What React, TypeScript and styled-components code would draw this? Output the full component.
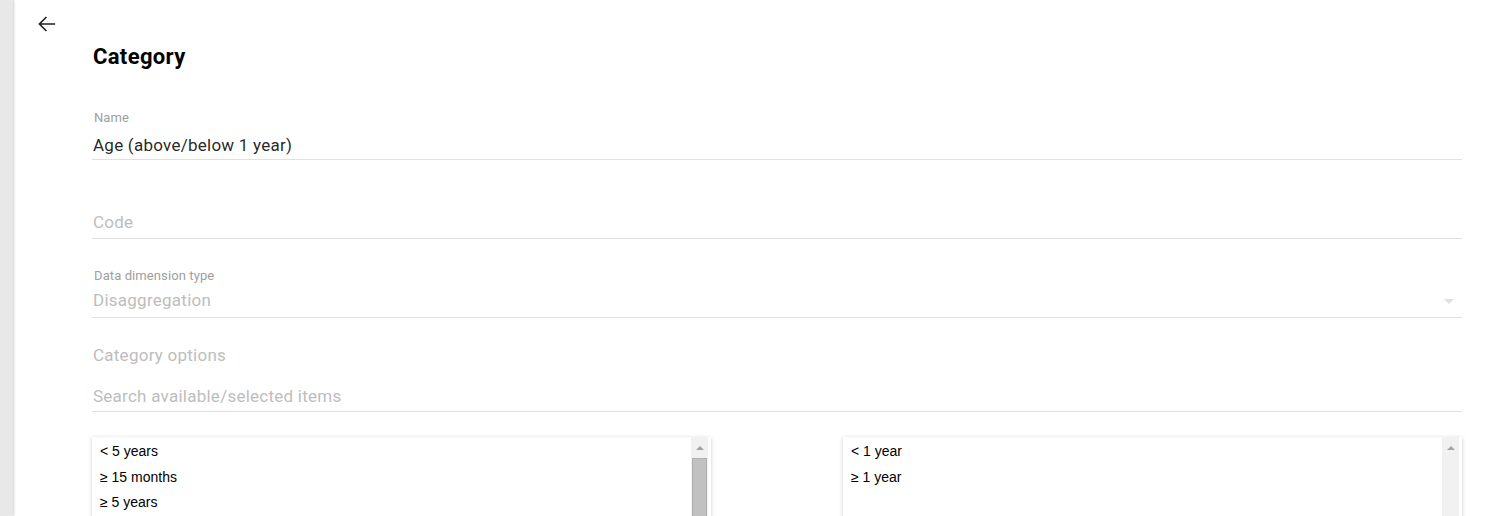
import React from 'react';
import styled, { createGlobalStyle } from 'styled-components';

const Global = createGlobalStyle`
  html, body {
    margin: 0;
    padding: 0;
    background: #ffffff;
    font-family: Roboto, "Liberation Sans", sans-serif;
    overflow: hidden;
  }
`;

const Page = styled.div`
  display: flex;
  height: 516px;
  overflow: hidden;
`;

const Sidebar = styled.div`
  width: 13px;
  flex-shrink: 0;
  background: #e8e8e8;
  box-shadow: 1px 0 2px rgba(0, 0, 0, 0.18);
`;

const Main = styled.div`
  flex: 1;
  position: relative;
  padding: 0 41px 0 79px;
`;

const BackButton = styled.button`
  position: absolute;
  left: 21px;
  top: 11px;
  width: 26px;
  height: 26px;
  padding: 0;
  border: 0;
  background: none;
  display: flex;
  align-items: center;
  justify-content: center;
  color: #212121;
`;

const Title = styled.h2`
  margin: 0;
  padding: 45px 0 0 1px;
  font-size: 22px;
  font-weight: 700;
  color: #000;
  line-height: 24px;
  letter-spacing: 0.35px;
`;

const Field = styled.div<{ $top: number }>`
  margin-top: ${p => p.$top}px;
  border-bottom: 1px solid #e0e0e0;
  position: relative;
`;

const Label = styled.div`
  font-size: 13px;
  color: #9e9e9e;
  line-height: 14px;
  padding-left: 2px;
  letter-spacing: 0.1px;
`;

const Value = styled.div<{ $muted?: boolean; $pt: number; $pb: number }>`
  font-size: 17px;
  letter-spacing: 0.25px;
  line-height: 20px;
  padding-left: 1px;
  color: ${p => (p.$muted ? '#bdbdbd' : 'rgba(0, 0, 0, 0.87)')};
  padding-top: ${p => p.$pt}px;
  padding-bottom: ${p => p.$pb}px;
`;

const Caret = styled.div`
  position: absolute;
  right: 8px;
  bottom: 13px;
  width: 0;
  height: 0;
  border-left: 5px solid transparent;
  border-right: 5px solid transparent;
  border-top: 5px solid #e0e0e0;
`;

const SectionLabel = styled.div`
  margin-top: 27px;
  padding-left: 1px;
  font-size: 17px;
  letter-spacing: 0.25px;
  line-height: 20px;
  color: #bdbdbd;
`;

const Lists = styled.div`
  margin-top: 25px;
  display: grid;
  grid-template-columns: 1fr 132px 1fr;
`;

const ListBox = styled.div`
  height: 200px;
  display: flex;
  background: #fff;
  box-shadow: 0 1px 4px rgba(0, 0, 0, 0.2);
`;

const Items = styled.ul`
  flex: 1;
  margin: 0;
  padding: 6px 0 0 8px;
  list-style: none;
  font-family: "Liberation Sans", Arial, sans-serif;
  font-size: 14px;
  color: #000;
`;

const Item = styled.li`
  line-height: 16px;
  height: 25.5px;
  box-sizing: border-box;
`;

const Track = styled.div`
  width: 17px;
  margin-right: 3px;
  background: #f1f1f1;
  display: flex;
  flex-direction: column;
  align-items: stretch;
`;

const ArrowUp = styled.div`
  height: 21px;
  display: flex;
  align-items: center;
  justify-content: center;
  &::before {
    content: '';
    border-left: 4px solid transparent;
    border-right: 4px solid transparent;
    border-bottom: 4px solid #a3a3a3;
  }
`;

const Thumb = styled.div`
  margin: 0 1px;
  height: 120px;
  background: #c1c1c1;
  border: 1px solid #b0b0b0;
`;

const available = ['< 5 years', '≥ 15 months', '≥ 5 years'];
const selected = ['< 1 year', '≥ 1 year'];

export default function App() {
  return (
    <Page>
      <Global />
      <Sidebar />
      <Main>
        <BackButton aria-label="back">
          <svg width="26" height="26" viewBox="0 0 24 24" fill="none" stroke="currentColor" strokeWidth="1.5">
            <path d="M19.5 12H5M11.5 5.5L5 12l6.5 6.5" />
          </svg>
        </BackButton>
        <Title>Category</Title>

        <Field $top={42}>
          <Label>Name</Label>
          <Value $pt={10} $pb={4}>Age (above/below 1 year)</Value>
        </Field>

        <Field $top={42}>
          <Value $muted $pt={10} $pb={6}>Code</Value>
        </Field>

        <Field $top={30}>
          <Label>Data dimension type</Label>
          <Value $muted $pt={7} $pb={7}>Disaggregation</Value>
          <Caret />
        </Field>

        <SectionLabel>Category options</SectionLabel>

        <Field $top={10}>
          <Value $muted $pt={11} $pb={5}>Search available/selected items</Value>
        </Field>

        <Lists>
          <ListBox>
            <Items>
              {available.map(o => (
                <Item key={o}>{o}</Item>
              ))}
            </Items>
            <Track>
              <ArrowUp />
              <Thumb />
            </Track>
          </ListBox>
          <div />
          <ListBox>
            <Items>
              {selected.map(o => (
                <Item key={o}>{o}</Item>
              ))}
            </Items>
            <Track>
              <ArrowUp />
            </Track>
          </ListBox>
        </Lists>
      </Main>
    </Page>
  );
}
